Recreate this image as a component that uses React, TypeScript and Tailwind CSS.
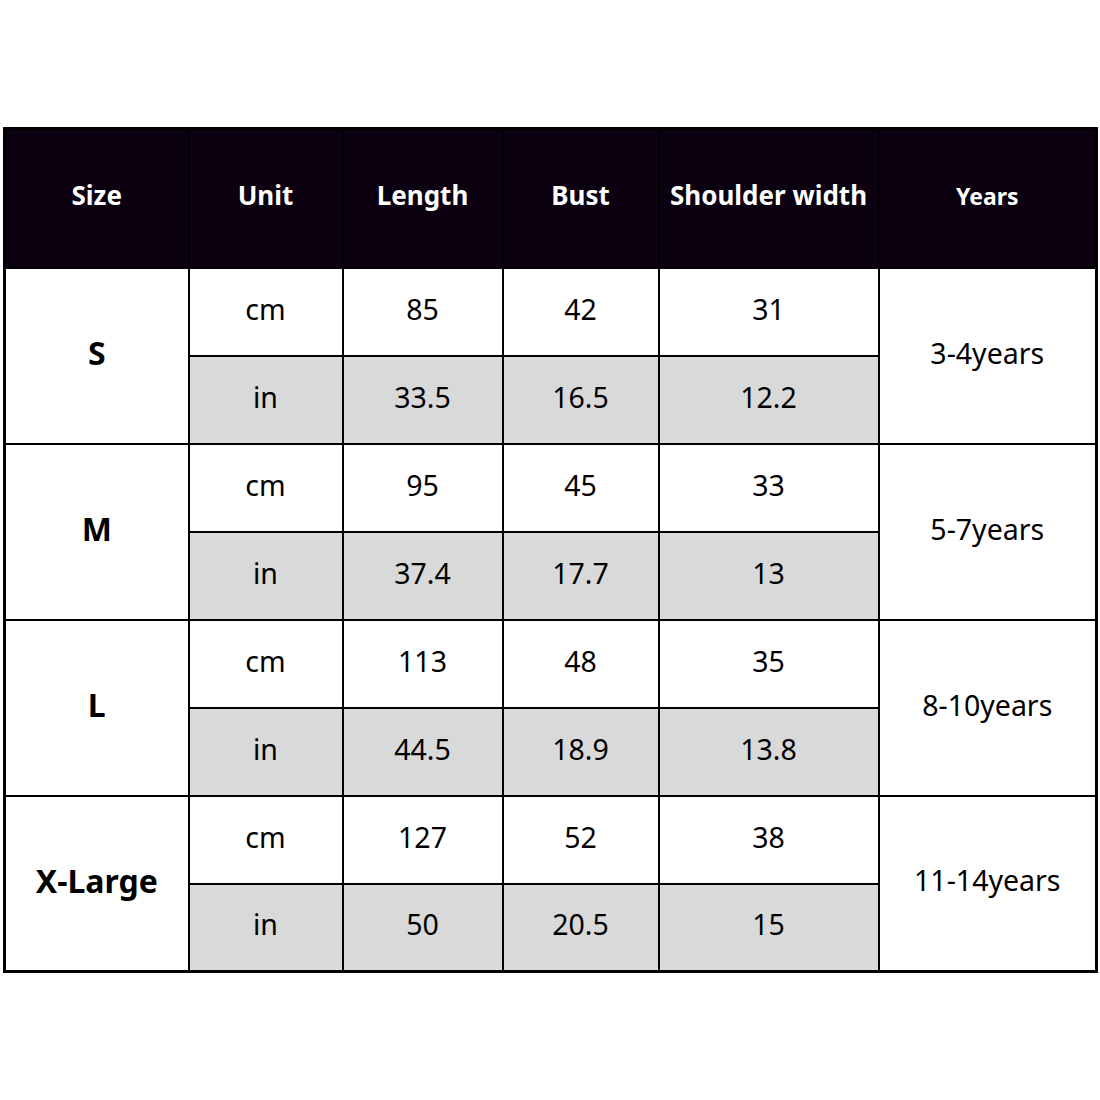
import React from "react";

const rows = [
  { size: "S", years: "3-4years", cm: ["85", "42", "31"], inch: ["33.5", "16.5", "12.2"] },
  { size: "M", years: "5-7years", cm: ["95", "45", "33"], inch: ["37.4", "17.7", "13"] },
  { size: "L", years: "8-10years", cm: ["113", "48", "35"], inch: ["44.5", "18.9", "13.8"] },
  { size: "X-Large", years: "11-14years", cm: ["127", "52", "38"], inch: ["50", "20.5", "15"] },
];

const cell = "border-2 border-black p-0 pb-[5px]";

export default function App() {
  return (
    <div className="w-[1100px] h-[1100px] bg-white pt-[127px] pl-[3px]" style={{ fontFamily: '"Noto Sans", "Open Sans", sans-serif' }}>
      <table className="table-fixed border-collapse w-[1092px] border-[3px] border-black text-black">
        <colgroup>
          <col className="w-[184px]" />
          <col className="w-[154px]" />
          <col className="w-[160px]" />
          <col className="w-[156px]" />
          <col className="w-[220px]" />
          <col className="w-[218px]" />
        </colgroup>
        <thead>
          <tr className="h-[139px] bg-[#0a0010] text-white font-bold text-[26px]">
            <th className={`${cell} font-bold`}>Size</th>
            <th className={`${cell} font-bold`}>Unit</th>
            <th className={`${cell} font-bold`}>Length</th>
            <th className={`${cell} font-bold`}>Bust</th>
            <th className={`${cell} font-bold whitespace-nowrap`}>Shoulder width</th>
            <th className={`${cell} font-bold text-[23px]`}>Years</th>
          </tr>
        </thead>
        <tbody className="text-[28.5px] text-center">
          {rows.map((r) => (
            <React.Fragment key={r.size}>
              <tr className="h-[88px]">
                <td rowSpan={2} className={`${cell} font-bold text-[32px]`}>{r.size}</td>
                <td className={cell}>cm</td>
                {r.cm.map((v, i) => (
                  <td key={i} className={cell}>{v}</td>
                ))}
                <td rowSpan={2} className={cell}>{r.years}</td>
              </tr>
              <tr className="h-[88px] bg-[#d9d9d9]">
                <td className={cell}>in</td>
                {r.inch.map((v, i) => (
                  <td key={i} className={cell}>{v}</td>
                ))}
              </tr>
            </React.Fragment>
          ))}
        </tbody>
      </table>
    </div>
  );
}
